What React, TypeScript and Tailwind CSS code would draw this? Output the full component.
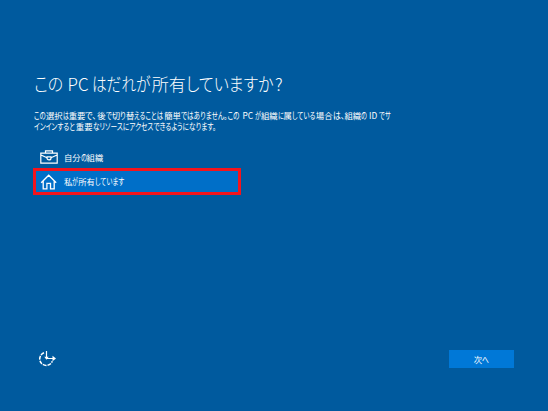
import { useLayoutEffect, useRef, useState } from "react";
import type { ReactNode } from "react";

function BriefcaseIcon() {
  return (
    <svg width="18" height="14" viewBox="0 0 18 14" fill="none" stroke="white" strokeWidth="1.2">
      <path d="M.8 3.2h16.4v9.9H.8zM5.5 3V.9h7V3M1 5l6 2.7M17 5l-6 2.7" />
      <path d="M7 6.8h4v1.1a2 2 0 0 1-4 0z" />
    </svg>
  );
}

function HomeIcon() {
  return (
    <svg width="18" height="16" viewBox="0 0 18 16" fill="none" stroke="white" strokeWidth="1.3">
      <path d="M1.2 8.8 8.7 1.2 16.2 8.8M3.2 7v7.8h3.7V9.3h3.6v5.5h3.7V7" />
    </svg>
  );
}

function EaseOfAccessIcon() {
  return (
    <svg width="19" height="16" viewBox="0 0 19 16" fill="none" stroke="white">
      <path d="M6 1.8A6.5 6.5 0 1 0 14.3 10.3" strokeWidth="1.5" strokeDasharray="3.8 1" />
      <path d="M8.5 0v8M8.5 7.5h8" strokeWidth="1.2" />
      <path d="m6.3 5.7 2.2 3 2.2-3zM14.5 4.8l3.5 2.7-3.5 2.7z" fill="white" stroke="none" />
    </svg>
  );
}

interface TextProps {
  text: string;
  ratio: number;
}

// A run of proportional kana, squeezed to fit a box of `ratio` em per character.
function KanaRun({ text, ratio }: TextProps) {
  const box = useRef<HTMLSpanElement>(null);
  const inner = useRef<HTMLSpanElement>(null);
  const [scale, setScale] = useState(ratio);

  useLayoutEffect(() => {
    if (!box.current || !inner.current) return;
    const target = parseFloat(getComputedStyle(box.current).width);
    const natural = parseFloat(getComputedStyle(inner.current).width);
    setScale(Math.min((target / natural) * 0.98, 0.92));
  }, [text, ratio]);

  return (
    <span ref={box} className="inline-block" style={{ width: `${text.length * ratio}em` }}>
      <span
        ref={inner}
        className="inline-block origin-left text-[1.06em] [font-feature-settings:'palt']"
        style={{ transform: `scaleX(${scale})` }}
      >
        {text}
      </span>
    </span>
  );
}

// Kanji and Latin keep their full width, kana and punctuation are narrowed.
function NarrowKana({ text, ratio }: TextProps) {
  const runs = text.split(/([\u3001-\u30ff]+)/);

  return (
    <>
      {runs.map((run, i) => (i % 2 === 1 ? <KanaRun key={i} text={run} ratio={ratio} /> : run))}
    </>
  );
}

interface OptionProps {
  icon: ReactNode;
  label: string;
  selected?: boolean;
}

function Option({ icon, label, selected }: OptionProps) {
  return (
    <button
      className={
        selected
          ? "flex h-[27px] w-[208px] items-center border-[3px] border-[#f5141c] bg-[#006fc8] pl-1"
          : "flex h-[22px] w-[208px] items-center pl-[7px]"
      }
    >
      <span className="flex w-6">{icon}</span>
      <span className="whitespace-nowrap text-[8.3px] leading-[10px]">
        <NarrowKana text={label} ratio={0.72} />
      </span>
    </button>
  );
}

export default function App() {
  return (
    <main className="flex h-[411px] w-[548px] flex-col bg-[#005a9e] font-['Noto_Sans_CJK_JP',sans-serif] text-white">
      <h1 className="ml-[34px] mt-[71px] h-[25px] whitespace-nowrap text-[17px] font-light leading-6">
        <NarrowKana text="この PC はだれが所有していますか?" ratio={0.875} />
      </h1>
      <div className="ml-[34px] mt-[14px] whitespace-nowrap text-[8.4px] leading-[11px]">
        <p>
          <NarrowKana
            text="この選択は重要で、後で切り替えることは簡単ではありません。この PC が組織に属している場合は、組織の ID でサ"
            ratio={0.71}
          />
        </p>
        <p>
          <NarrowKana text="インインすると重要なリソースにアクセスできるようになります。" ratio={0.712} />
        </p>
      </div>
      <div className="ml-[33px] mt-[14px] flex flex-col">
        <Option icon={<BriefcaseIcon />} label="自分の組織" />
        <Option icon={<HomeIcon />} label="私が所有しています" selected />
      </div>
      <footer className="mb-[43px] ml-[38px] mr-[34px] mt-auto flex items-center justify-between">
        <EaseOfAccessIcon />
        <button className="h-[18px] w-[65px] bg-[#0078d7] text-[8.3px] leading-[10px]">
          <NarrowKana text="次へ" ratio={0.85} />
        </button>
      </footer>
    </main>
  );
}
